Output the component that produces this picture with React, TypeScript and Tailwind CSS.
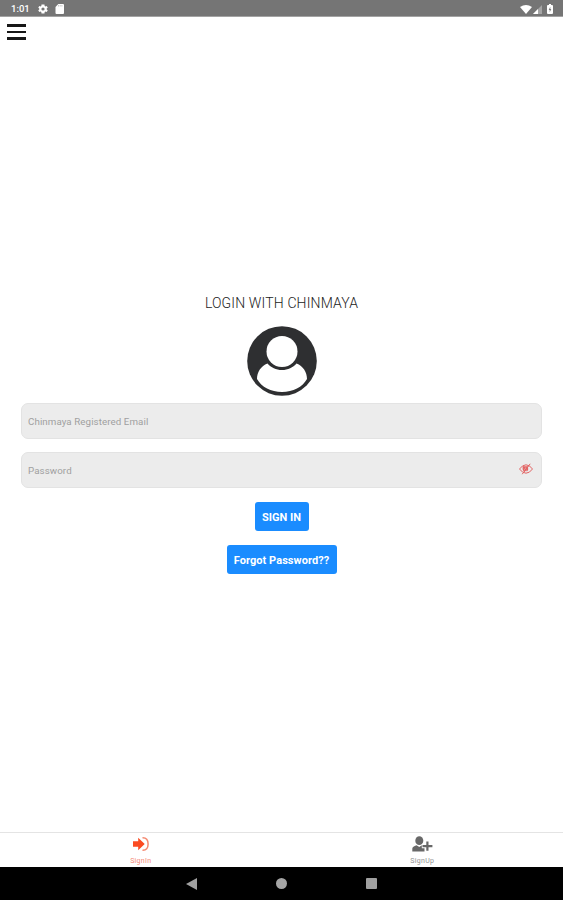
import type { ReactNode } from 'react';

function StatusBar() {
  return (
    <header className="flex h-[17px] shrink-0 items-center justify-between border-b border-[#a3a3a3] bg-[#757575] pt-[2px] pr-[10px] pl-[11px] text-white">
      <div className="flex items-center">
        <span className="w-[19px] text-[9.500px] leading-none font-medium">1:01</span>
        <svg className="ml-[7px] size-[12px]" viewBox="0 0 24 24" fill="currentColor">
          <path
            fillRule="evenodd"
            d="M19.4 13a7.600 7.600 0 0 0 0-2l2.100-1.600-2-3.500-2.500 1a7.500 7.500 0 0 0-1.700-1L15 3H9l-.4 2.900a7.500 7.500 0 0 0-1.700 1l-2.400-1-2 3.500L4.600 11a7.600 7.600 0 0 0 0 2l-2.100 1.600 2 3.500 2.400-1a7.500 7.500 0 0 0 1.700 1L9 21h6l.3-2.900a7.500 7.500 0 0 0 1.700-1l2.500 1 2-3.500zM12 15.200a3.200 3.200 0 1 1 0-6.400 3.200 3.200 0 0 1 0 6.400z"
          />
        </svg>
        <svg className="ml-[6px] h-[10px] w-[9px]" viewBox="0 0 9 10" fill="currentColor">
          <path d="M3.300 0H8q1 0 1 1v8q0 1-1 1H1.500q-1 0-1-1V3z" />
          <path d="M3.500 1v1.500M5.200 1v1.500M6.900 1v1.500" stroke="#a5a5a5" strokeWidth=".6" />
        </svg>
      </div>
      <div className="flex items-center">
        <svg className="h-[9px] w-[12px]" viewBox="0 0 12 9" fill="currentColor">
          <path d="M0 2Q6-1.800 12 2L6 9z" />
        </svg>
        <svg className="ml-px h-[9px] w-[9px]" viewBox="0 0 9 9" fill="currentColor">
          <path d="M9 0v9H0z" opacity=".35" />
          <path d="M5 4v5H0z" />
        </svg>
        <svg className="ml-[5px] h-[10px] w-[6px]" viewBox="0 0 6 10" fill="currentColor">
          <path d="M2 0h2v1h1q1 0 1 1v7q0 1-1 1H1q-1 0-1-1V2q0-1 1-1h1z" />
          <path d="M3.300 2.800 1.700 6h1v2.200L4.300 5h-1z" fill="#757575" />
        </svg>
      </div>
    </header>
  );
}

function Avatar() {
  return (
    <svg className="size-[70px]" viewBox="0 0 70 70">
      <circle cx="35" cy="35" r="34.800" fill="#2e2f31" />
      <path
        d="M20.500 37.500C14 40 10 46 10 53 14.500 61 24 66 35 66S55.500 61 60 53C60 46 56 40 49.500 37.500 46 41.500 41 44 35 44S24 41.500 20.500 37.500z"
        fill="#fff"
      />
      <circle cx="35" cy="25.500" r="17.800" fill="#2e2f31" />
      <circle cx="35" cy="25.500" r="15.500" fill="#fff" />
    </svg>
  );
}

function Field({ type, placeholder, children }: { type: string; placeholder: string; children?: ReactNode }) {
  return (
    <div className="flex h-[36px] w-full items-center rounded-[7px] border border-[#e3e3e3] bg-[#ececec] pr-[8px] pl-[6px]">
      <input
        type={type}
        placeholder={placeholder}
        className="min-w-0 flex-1 bg-transparent pt-[3px] text-[9.750px] tracking-[0.080px] outline-none placeholder:text-[#a0a0a0]"
      />
      {children}
    </div>
  );
}

function EyeOffIcon() {
  return (
    <svg className="mb-px h-[12px] w-[14px]" viewBox="0 0 14 12" fill="none" stroke="#e26464">
      <path d="M.5 6Q3.500 1.800 7 1.800T13.500 6Q10.500 10.200 7 10.200T.5 6z" strokeWidth="1" />
      <path d="M4.500 3.200Q3.500 7 6 8.500M8.500 5Q9 7 7.500 8M5 4h3.500L6.500 7z" strokeWidth="1.300" />
      <path d="M11.200.8 3.200 11.200" strokeWidth="1" />
    </svg>
  );
}

function LoginIcon() {
  return (
    <svg className="h-[14px] w-[16px]" viewBox="0 0 16 14">
      <path d="M0 4.300h5.200V.8L11.700 7l-6.500 6.200V9.700H0z" fill="#fb4b22" />
      <path d="M9.500.8q5.600-.2 5.600 6.200t-5.600 6.200" fill="none" stroke="#f4886f" strokeWidth="1.500" />
    </svg>
  );
}

function AddUserIcon() {
  return (
    <svg className="h-[16px] w-[21px]" viewBox="0 0 21 16" fill="#686868">
      <ellipse cx="7.300" cy="4.700" rx="4" ry="4.400" />
      <path d="M.3 15.500v-3Q.5 10.500 4.500 9.200L7.300 11l2.500-1.800v3h2.700v3.300z" />
      <path d="M14.300 5.500h2.200v3.600h3.900v2.100h-3.900v3.600h-2.200v-3.600h-3.800V9.100h3.800z" />
    </svg>
  );
}

export default function App() {
  return (
    <div className="flex h-[900px] w-full flex-col overflow-hidden bg-white font-['Roboto',sans-serif]">
      <StatusBar />

      <main className="flex flex-1 flex-col">
        <button aria-label="Menu" className="mt-[7px] ml-[7px] flex w-[18.500px] flex-col gap-[4px]">
          <span className="h-[2.500px] w-full bg-[#171717]" />
          <span className="h-[2.500px] w-full bg-[#171717]" />
          <span className="h-[2.500px] w-full bg-[#171717]" />
        </button>

        <form className="mt-[255px] flex flex-col items-center px-[21px]">
          <h1 className="h-[16px] text-[14px] leading-[16px] font-light tracking-[0.15px] text-[#222]">
            LOGIN WITH CHINMAYA
          </h1>
          <div className="mt-[15px] mb-[7px]">
            <Avatar />
          </div>
          <Field type="email" placeholder="Chinmaya Registered Email" />
          <div className="mt-[13px] w-full">
            <Field type="password" placeholder="Password">
              <EyeOffIcon />
            </Field>
          </div>
          <button
            type="button"
            className="mt-[14px] h-[29px] w-[54px] rounded-[3px] bg-[#1a8cff] pt-[4px] text-[11px] font-bold text-white"
          >
            SIGN IN
          </button>
          <button
            type="button"
            className="mt-[14px] h-[29px] w-[110px] rounded-[3px] bg-[#1a8cff] pt-[4px] text-[11px] font-bold tracking-[0.060px] text-white"
          >
            Forgot Password??
          </button>
        </form>
      </main>

      {/* Tabs */}
      <nav className="grid h-[35px] shrink-0 grid-cols-2 border-t border-[#e4e4e4] text-[7px] leading-[8px]">
        <div className="flex flex-col items-center pt-[4px] text-[#f58a78]">
          <LoginIcon />
          <span className="mt-[6px] tracking-[0.3px]">SignIn</span>
        </div>
        <div className="flex flex-col items-center pt-[3px] text-[#929292]">
          <AddUserIcon />
          <span className="mt-[5px] tracking-[0.3px]">SignUp</span>
        </div>
      </nav>

      {/* Android navigation */}
      <footer className="flex h-[33px] shrink-0 items-center justify-center gap-[79px] bg-black">
        <svg className="h-[12px] w-[11px]" viewBox="0 0 11 12" fill="#a0a0a0">
          <path d="M11 0v12L0 6z" />
        </svg>
        <span className="size-[11px] rounded-full bg-[#a5a5a5]" />
        <span className="size-[11px] rounded-[1px] bg-[#a0a0a0]" />
      </footer>
    </div>
  );
}
